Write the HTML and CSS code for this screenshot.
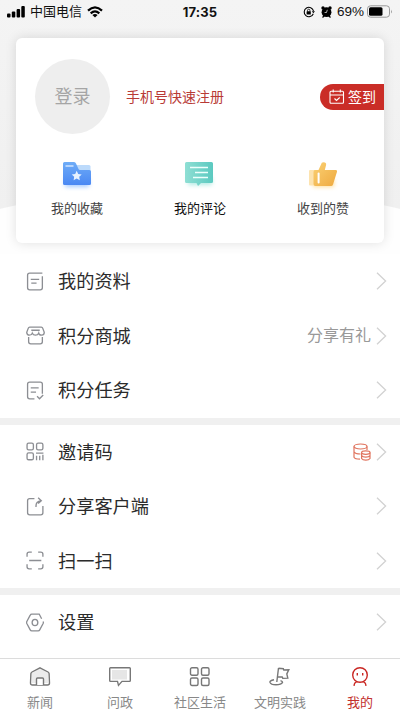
FILE: index.html
```html
<!DOCTYPE html>
<html lang="zh-CN">
<head>
<meta charset="utf-8">
<title>我的</title>
<link rel="stylesheet" href="styles.css">
</head>
<body>
<div class="screen">
  <div class="hero">
    <header class="status">
      <div class="status-left">
        <svg width="18" height="12" viewBox="0 0 18 12"><rect x="0" y="7.5" width="3.5" height="4" rx="1"/><rect x="4.8" y="5.5" width="3.5" height="6" rx="1"/><rect x="9.6" y="3" width="3.5" height="8.500" rx="1"/><rect x="14.300" y="0" width="3.500" height="11.500" rx="1"/></svg>
        <span class="carrier">中国电信</span>
        <svg width="16" height="12" viewBox="0 0 16 12"><g fill="none" stroke="#000" stroke-width="2.200"><path d="M1 4.600Q8 -2 15 4.600"/><path d="M3.700 7.400Q8 3.400 12.300 7.400"/></g><path d="M5.400 9Q8 6.900 10.600 9L8 11.600Z"/></svg>
      </div>
      <div class="clock">17:35</div>
      <div class="status-right">
        <svg width="12" height="12" viewBox="0 0 12 12"><path d="M10.300 7.700A4.700 4.700 0 1 1 10.500 5" fill="none" stroke="#000" stroke-width="1.100"/><path d="M8.800 5.300h3.200l-1.600 2z"/><rect x="3.600" y="5.300" width="4.200" height="3.200" rx=".5"/><path d="M4.500 5.500V4.400a1.200 1.200 0 0 1 2.400 0v1.100" fill="none" stroke="#000" stroke-width=".8"/></svg>
        <svg class="alarm" width="11" height="12" viewBox="0 0 11 12"><circle cx="5.500" cy="6.200" r="4.900"/><circle cx="2" cy="2" r="1.700"/><circle cx="9" cy="2" r="1.700"/><path d="M1.500 11.500l2-2M9.500 11.500l-2-2" stroke="#000" stroke-width="1.300"/><path d="M6.300 3.800l-.8 2.700H3.600" fill="none" stroke="#f4f4f4" stroke-width=".7"/></svg>
        <span class="percent">69%</span>
        <svg width="26" height="13" viewBox="0 0 26 13"><rect x=".5" y=".8" width="22" height="11.400" rx="3" fill="none" stroke="#999"/><rect x="2" y="2.300" width="13.500" height="8.400" rx="1.500"/><path d="M24 4.500q1.600 2 0 4z" fill="#999"/></svg>
      </div>
    </header>
    <section class="card">
      <div class="account">
        <div class="avatar">登录</div>
        <span class="register">手机号快速注册</span>
        <div class="checkin">
          <svg width="16" height="16" viewBox="0 0 16 16" fill="none" stroke="#fff" stroke-width="1.100"><rect x="1" y="2.300" width="13.500" height="12" rx="1"/><path d="M1 6h13.500M4.200.5v3M11.300.5v3M5.500 9.500l2 2 3.200-3"/></svg>
          <span>签到</span>
        </div>
      </div>
      <div class="shortcuts">
        <div class="shortcut">
          <svg width="32" height="28" viewBox="0 0 32 28">
            <defs><linearGradient id="blue" x1="0" y1="0" x2="0" y2="1"><stop stop-color="#6eacf7"/><stop offset="1" stop-color="#4b88f3"/></linearGradient></defs>
            <rect class="glow" x="4" y="16" width="24" height="9" fill="#a9ccff"/><path d="M15 3h13q1.500 0 1.500 1.500V10H15z" fill="#bcdafb"/>
            <path d="M3.500 0H13q1.500 0 2 1.500L17.500 7q.5 1 1.500 1h9.500q1.500 0 1.500 1.500v12q0 1.500-1.500 1.500h-25Q2 23 2 21.500v-20Q2 0 3.500 0z" fill="url(#blue)"/><path d="M4.500 4h8" stroke="#e1efff" stroke-width="1.300"/><path d="M15.700 8.800l1.500 3.100 3.500.5-2.500 2.400.6 3.500-3.100-1.700-3.100 1.700.6-3.500-2.500-2.400 3.500-.5z" fill="#e7f2ff"/>
          </svg>
          <span>我的收藏</span>
        </div>
        <div class="shortcut active">
          <svg width="32" height="28" viewBox="0 0 32 28">
            <defs><linearGradient id="teal"><stop stop-color="#8fdfd4"/><stop offset="1" stop-color="#5bc9c0"/></linearGradient></defs>
            <rect class="glow" x="4" y="15" width="24" height="8" fill="#b3ebe4"/>
            <path d="M2.500 0h25Q29 0 29 1.500v18q0 1.500-1.500 1.500H17l-3 3-1.500-3h-10Q1 21 1 19.500v-18Q1 0 2.500 0z" fill="url(#teal)"/><path d="M6 5.500h18M11 10.500h13M9 15.500h15" stroke="#edfffc" stroke-width="1.400"/>
          </svg>
          <span>我的评论</span>
        </div>
        <div class="shortcut">
          <svg width="32" height="28" viewBox="0 0 32 28">
            <defs><linearGradient id="gold" x2="1" y2="1"><stop stop-color="#fbd174"/><stop offset="1" stop-color="#eea93f"/></linearGradient></defs>
            <rect class="glow" x="6" y="17" width="21" height="8" fill="#ffdf9b"/><rect x="2" y="8" width="8" height="15.500" rx="1" fill="#fde3af"/>
            <path d="M8 8h3.500L14.800.7Q16-.3 18 .5q1.600.7 1.100 2.600L17.800 8h11q1.700.1 1.200 1.800l-4 12.700q-.5 1.500-2 1.500H8.500Q6.500 24 6.500 22V10Q6.500 8 8 8z" fill="url(#gold)"/><path d="M11.600 11.500v9" stroke="#fff" stroke-width="2" stroke-linecap="round"/>
          </svg>
          <span>收到的赞</span>
        </div>
      </div>
    </section>
  </div>

  <nav class="group">
    <div class="row">
      <svg class="icon" viewBox="0 0 18 18"><path d="M15.500 4v11q0 2-2 2h-10q-2 0-2-2V3q0-2 2-2h12M4.500 7h8M5 10.500h5"/></svg>
      <span class="name">我的资料</span><svg class="arrow" viewBox="0 0 11 18"><path d="M1 .7l8.600 8.300L1 17.300"/></svg>
    </div>
    <div class="row">
      <svg class="icon" viewBox="0 0 18 18"><path d="M3.500 1h11q1 0 1.300 1l1.500 4q0 2.700-2.500 2.700T12 6.800Q11.200 8.700 9 8.700T6 6.800Q5.500 8.700 3.200 8.700T.7 6L2.200 2q.3-1 1.300-1zM2.500 10.500V15q0 2 2 2h9q2 0 2-2v-4.500M5 4h8"/></svg>
      <span class="name">积分商城</span><span class="note">分享有礼</span><svg class="arrow" viewBox="0 0 11 18"><path d="M1 .7l8.600 8.300L1 17.300"/></svg>
    </div>
    <div class="row">
      <svg class="icon" viewBox="0 0 18 18"><path d="M15.500 12V3q0-2-2-2h-10q-2 0-2 2v12q0 2 2 2H8M4.500 6.500h7.500M4.500 10.500h5M10.500 14.500l2.300 2.300 3.500-3.500"/></svg>
      <span class="name">积分任务</span><svg class="arrow" viewBox="0 0 11 18"><path d="M1 .7l8.600 8.300L1 17.300"/></svg>
    </div>
  </nav>
  <nav class="group">
    <div class="row">
      <svg class="icon" viewBox="0 0 18 18"><rect x="1" y="1" width="6" height="6.500" rx="1.500"/><rect x="10" y="1" width="6" height="6.500" rx="1.500"/><rect x="1" y="10.300" width="6" height="6.500" rx="1.500"/><path d="M9.500 10.500h7M10 13v4.300M13 13v4.300M16 12v5.300"/></svg>
      <span class="name">邀请码</span>
      <svg class="coins" width="18" height="18" viewBox="0 0 18 18"><ellipse cx="7.500" cy="3.500" rx="6.500" ry="2.500"/><path d="M1 3.500v10.700q1 1.800 6 2M14 3.500V7M1 8.800q1 2.200 6.500 2.200"/><ellipse cx="12.800" cy="9.600" rx="4.200" ry="1.700"/><path d="M8.600 9.600v5.900q1 1.700 4.200 1.700t4.200-1.700V9.600M8.600 12.500q1 1.600 4.200 1.600t4.200-1.600"/></svg>
      <svg class="arrow" viewBox="0 0 11 18"><path d="M1 .7l8.600 8.300L1 17.300"/></svg>
    </div>
    <div class="row">
      <svg class="icon" viewBox="0 0 18 18"><path d="M8 1.500H3.500q-2 0-2 2V15q0 2 2 2H14q2 0 2-2V8.500M9.500 9.500Q9 4 14.500 3.500M11.500.7l3 2.800-3 2.700"/></svg>
      <span class="name">分享客户端</span><svg class="arrow" viewBox="0 0 11 18"><path d="M1 .7l8.600 8.300L1 17.300"/></svg>
    </div>
    <div class="row">
      <svg class="icon" viewBox="0 0 18 18"><path d="M1 5.500V3q0-2 2-2h2.500M11.500 1H14q2 0 2 2v2.500M16 12.500V15q0 2-2 2h-2.500M5.500 17H3q-2 0-2-2v-2.500M3 9h11.500"/></svg>
      <span class="name">扫一扫</span><svg class="arrow" viewBox="0 0 11 18"><path d="M1 .7l8.600 8.300L1 17.300"/></svg>
    </div>
  </nav>
  <nav class="group last">
    <div class="row">
      <svg class="icon" viewBox="0 0 18 18"><path d="M14.800 5.500L12.500 1h-7q-1 0-1.500 1L.8 8q-.5 1 0 2L4 16q.5 1 1.500 1h6q1 0 1.500-1l3.200-6q.5-1 0-2"/><ellipse cx="8.500" cy="9" rx="2.700" ry="3"/></svg>
      <span class="name">设置</span><svg class="arrow" viewBox="0 0 11 18"><path d="M1 .7l8.600 8.300L1 17.300"/></svg>
    </div>
  </nav>

  <footer class="tabs">
    <div class="tab">
      <svg viewBox="0 0 22 20"><path d="M3 6l8-4.500L19 6v10H3z" fill="#ececec" stroke="none"/><path d="M11 .8l8 4.200q1 .6 1.100 1.600L20.500 16q0 2-2 2h-15q-2 0-2-2l.4-9.400Q2 5.600 3 5z"/><path d="M7.500 18v-6q0-1 1-1h5q1 0 1 1v6" fill="#fff"/></svg><span>新闻</span>
    </div>
    <div class="tab">
      <svg viewBox="0 0 22 20"><rect x="3" y="3" width="15" height="9.500" fill="#e6e6e6" stroke="none"/><path d="M1.500.8h19q.8 0 .8.800v12q0 .8-.8.800H13l-3.500 4-1-4h-7q-.8 0-.8-.8v-12q0-.8.800-.8z"/></svg><span>问政</span>
    </div>
    <div class="tab">
      <svg viewBox="0 0 22 20"><rect x="1.500" y=".8" width="7.500" height="7.500" rx="1.500"/><rect x="12.500" y=".8" width="7.500" height="7.500" rx="1.500"/><rect x="1.500" y="11" width="7.500" height="7.500" rx="1.500"/><rect x="12.500" y="11" width="7.500" height="7.500" rx="1.500"/></svg><span>社区生活</span>
    </div>
    <div class="tab">
      <svg viewBox="0 0 22 20"><path d="M9.500 1L7.800 15M9.500 1.300l4.800.4.500 1.300 5-.3-2 4.200 1 4.300-5 .2-.6-1.400-4.900-.3M5 12.700q-4.500 1-4 2.700.8 2.400 6 2.400t6.500-2.400q.3-1-2-1.700"/></svg><span>文明实践</span>
    </div>
    <div class="tab current">
      <svg viewBox="0 0 22 20"><circle cx="11" cy="8" r="7.300"/><path d="M8.300 6v2.500M13.700 6v2.500"/><path d="M5 18.800q.5-4 3.500-4.200M17 18.800q-.5-4-3.500-4.200"/></svg><span>我的</span>
    </div>
  </footer>
</div>
</body>
</html>
```
FILE: styles.css
```css
* { box-sizing: border-box; }

body {
  margin: 0;
  background: #fff;
  color: #2b2b2b;
  font-family: "Liberation Sans", "Noto Sans CJK SC", sans-serif;
}

svg { display: block; flex: none; }

.screen {
  width: 400px;
  height: 711px;
  display: flex;
  flex-direction: column;
  overflow: hidden;
}

.hero {
  flex: none;
  height: 254px;
  padding: 0 16px;
  background: radial-gradient(ellipse 300px 80px at 50% 268px, #fefefe 99%, transparent 100%), linear-gradient(#f4f4f4 0, #f0f0f0 209px, #fefefe 210px);
}

.status {
  height: 38px;
  margin: 0 -9px;
  padding-bottom: 15px;
  display: grid;
  grid-template-columns: 1fr auto 1fr;
  align-items: center;
  color: #111;
}

.status-left, .status-right { display: flex; align-items: center; }
.status-left { gap: 5px; }
.status-right { justify-content: flex-end; }
.carrier { padding-top: 1px; font-size: 13px; line-height: 16px; }
.clock { font: bold 13px/16px Inter, sans-serif; letter-spacing: .1px; }
.alarm { margin: 0 5px 0 6px; }
.percent { font: 13.500px/16px "Liberation Sans", sans-serif; margin-right: 3px; }

.card {
  height: 205px;
  padding-top: 21px;
  background: #fff;
  border-radius: 6px;
  box-shadow: 0 0 12px rgba(0, 0, 0, .12);
}

.account { display: flex; align-items: center; height: 75px; padding-left: 19px; }

.avatar {
  width: 75px;
  height: 75px;
  border-radius: 50%;
  background: #eee;
  color: #a5a5a5;
  font-size: 18px;
  line-height: 77px;
  text-align: center;
}

.register { margin-left: 16px; color: #b83a36; font-size: 14px; line-height: 20px; }

.checkin {
  width: 64px;
  height: 26px;
  margin-left: auto;
  padding-left: 9px;
  display: flex;
  align-items: center;
  gap: 3px;
  border-radius: 13px 0 0 13px;
  background: #ca2d27;
  color: #fff;
  font-size: 14px;
  line-height: 20px;
}

.shortcuts { display: flex; justify-content: space-between; padding: 28px 30px 0; }

.shortcut {
  width: 62px;
  display: flex;
  flex-direction: column;
  align-items: center;
  gap: 10px;
  color: #444;
  font-size: 13px;
  line-height: 18px;
}

.shortcut svg { height: 28px; overflow: visible; }
.active { color: #111; }
.glow { filter: blur(2px); }

.group { flex: none; border-bottom: 7px solid #f0f0f0; }
.group.last { height: 63px; border: 0; }

.row {
  height: 54.500px;
  padding: 0 13px 0 26px;
  display: flex;
  align-items: center;
}

.icon { width: 19px; height: 19px; fill: none; stroke: #8c8e93; stroke-width: 1.250; }
.name { margin: 0 auto 0 13px; padding-top: 2px; font-size: 18.200px; line-height: 26px; }
.note { padding-top: 1px; color: #999; font-size: 16px; line-height: 22px; }
.arrow { width: 11px; height: 18px; margin-left: 5px; fill: none; stroke: #d2d2d2; stroke-width: 1.300; }
.coins { fill: none; stroke: #e0745e; stroke-width: 1.200; }

.tabs {
  flex: none;
  height: 53px;
  display: grid;
  grid-template-columns: repeat(5, 1fr);
  border-top: 1px solid #dcdcdc;
}

.tab {
  display: flex;
  flex-direction: column;
  align-items: center;
  padding-top: 8px;
  gap: 7px;
  color: #888;
  font-size: 13px;
  line-height: 18px;
}

.tab svg { width: 22px; height: 20px; fill: none; stroke: #777; stroke-width: 1.400; }
.current { color: #c2302c; }
.current svg { stroke: #c92723; }
```
